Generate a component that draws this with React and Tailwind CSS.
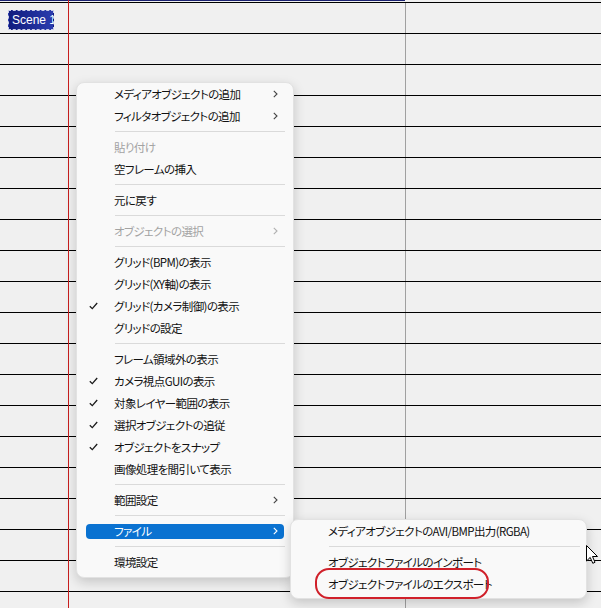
import React from "react";

const FONT = "font-['Noto_Sans_CJK_JP','Noto_Sans',sans-serif] [font-feature-settings:'palt']";

function Check() {
  return (
    <svg width="9" height="8" viewBox="0 0 9 8" className="block">
      <path d="M0.8 4.2 L3.3 6.6 L8.2 1" fill="none" stroke="#1a1a1a" strokeWidth="1.3" />
    </svg>
  );
}

function Chevron({ color = "#333" }) {
  return (
    <svg width="5" height="8" viewBox="0 0 5 8" className="block">
      <path d="M0.8 0.8 L4 4 L0.8 7.2" fill="none" stroke={color} strokeWidth="1.1" />
    </svg>
  );
}

function Item({ label, check, arrow, disabled, highlight }) {
  const text = highlight ? "text-white" : disabled ? "text-[#a3a3a3]" : "text-[#111]";
  return (
    <div className="h-[22px] flex items-center px-[9px]">
      <div
        className={
          "flex-1 h-[15px] flex items-center rounded-[4px] " +
          (highlight ? "bg-[#0a72d1]" : "")
        }
      >
        <div className="w-[28px] pl-[3px] flex items-center">{check ? <Check /> : null}</div>
        <div className={"flex-1 text-[11.5px] leading-[15px] tracking-[-0.6px] whitespace-nowrap " + text}>{label}</div>
        {arrow ? (
          <div className="pr-[6px] flex items-center">
            <Chevron color={highlight ? "#ffffff" : disabled ? "#b0b0b0" : "#444"} />
          </div>
        ) : null}
      </div>
    </div>
  );
}

function Sep({ left = "pl-[38px]", right = "pr-[8px]" }) {
  return (
    <div className={"h-[9px] flex items-center " + left + " " + right}>
      <div className="flex-1 h-px bg-[#dadada]" />
    </div>
  );
}

export default function App() {
  const rows = Array.from({ length: 20 });
  return (
    <div className={"relative w-[601px] h-[608px] overflow-hidden bg-[#f0f0f0] " + FONT}>
      {/* timeline background */}
      <div className="flex flex-col">
        <div className="h-[2px] flex">
          <div className="w-[405px] h-[1px] bg-[#1a2170]" />
        </div>
        {rows.map((_, i) => (
          <div key={i} className="h-[31px] border-t border-black shrink-0" />
        ))}
      </div>

      {/* vertical lines */}
      <div className="absolute left-[68px] top-0 w-px h-full bg-[#c81e1e]" />
      <div className="absolute left-[405px] top-[3px] w-px h-full bg-[#a0a0a0]" />
      {/* re-draw horizontal lines over gray line */}
      <div className="absolute left-0 top-0 w-full flex flex-col pointer-events-none">
        <div className="h-[2px]" />
        {rows.map((_, i) => (
          <div key={i} className="h-[31px] border-t border-black shrink-0 ml-[400px] w-[10px]" />
        ))}
      </div>

      {/* scene label */}
      <div className="absolute left-[8px] top-[10px] w-[46px] h-[20px] overflow-hidden bg-gradient-to-r from-[#111c7e] to-[#2b3cae] border border-dashed border-[#c8cce8] flex items-center">
        <span className="pl-[3px] text-[12px] leading-[14px] text-white whitespace-nowrap font-['Liberation_Sans',sans-serif]">
          Scene&nbsp;1
        </span>
      </div>

      {/* main context menu */}
      <div className="absolute left-[76px] top-[82px] w-[218px] bg-[#f9f9f9] border border-[#e2e2e2] rounded-[8px] shadow-[0_4px_12px_rgba(0,0,0,0.18)] pt-0 pb-[4px]">
        <Item label="メディアオブジェクトの追加" arrow />
        <Item label="フィルタオブジェクトの追加" arrow />
        <Sep />
        <Item label="貼り付け" disabled />
        <Item label="空フレームの挿入" />
        <Sep />
        <Item label="元に戻す" />
        <Sep />
        <Item label="オブジェクトの選択" arrow disabled />
        <Sep />
        <Item label="グリッド(BPM)の表示" />
        <Item label="グリッド(XY軸)の表示" />
        <Item label="グリッド(カメラ制御)の表示" check />
        <Item label="グリッドの設定" />
        <Sep />
        <Item label="フレーム領域外の表示" />
        <Item label="カメラ視点GUIの表示" check />
        <Item label="対象レイヤー範囲の表示" check />
        <Item label="選択オブジェクトの追従" check />
        <Item label="オブジェクトをスナップ" check />
        <Item label="画像処理を間引いて表示" />
        <Sep />
        <Item label="範囲設定" arrow />
        <Sep />
        <Item label="ファイル" arrow highlight />
        <Sep />
        <Item label="環境設定" />
      </div>

      {/* submenu */}
      <div className="absolute left-[290px] top-[519px] w-[297px] bg-[#f9f9f9] border border-[#e2e2e2] rounded-[8px] shadow-[0_4px_12px_rgba(0,0,0,0.18)] pt-0 pb-[3px]">
        <Item label="メディアオブジェクトのAVI/BMP出力(RGBA)" />
        <Sep left="pl-[38px]" right="pr-[6px]" />
        <Item label="オブジェクトファイルのインポート" />
        <Item label="オブジェクトファイルのエクスポート" />
      </div>

      {/* red annotation */}
      <div className="absolute left-[315px] top-[568px] w-[174px] h-[31px] border-2 border-[#d0202a] rounded-[14px]" />

      {/* mouse cursor */}
      <svg className="absolute left-[586px] top-[545px]" width="13" height="20" viewBox="0 0 13 20">
        <path
          d="M0.5 0.5 L0.5 16 L4.2 12.4 L6.8 18.3 L9 17.3 L6.5 11.5 L11.5 11.5 Z"
          fill="#ffffff"
          stroke="#000000"
          strokeWidth="1"
          strokeLinejoin="round"
        />
      </svg>
    </div>
  );
}
